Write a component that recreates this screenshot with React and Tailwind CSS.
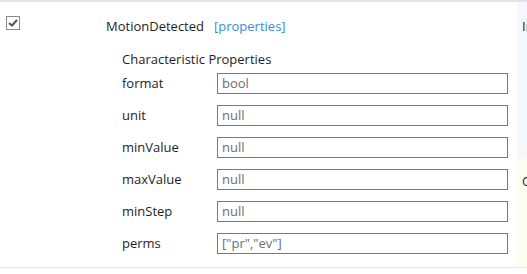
import React from "react";

const props = [
  { key: "format", value: "bool" },
  { key: "unit", value: "null" },
  { key: "minValue", value: "null" },
  { key: "maxValue", value: "null" },
  { key: "minStep", value: "null" },
  { key: "perms", value: '["pr","ev"]' },
];

const App = () => {
  return (
    <div className="w-[527px] h-[274px] bg-white overflow-hidden font-['Open_Sans',sans-serif] text-[13px] text-[#1e1e1e]">
      <div className="flex h-[268px] border-t-2 border-[#e3e3e3] border-b border-b-[#e6e6e6]">
        {/* main cell */}
        <div className="w-[517px] flex">
          <div className="w-[106px] pl-[6px] pt-[14px]">
            <div className="w-[14px] h-[14px] border border-[#8a8a8a] flex items-center justify-center">
              <svg width="10" height="8" viewBox="0 0 10 8">
                <path d="M1 4 L4 6.5 L9 1" stroke="#555" strokeWidth="2" fill="none" />
              </svg>
            </div>
          </div>
          <div className="flex-1 pt-[14px]">
            <div className="flex items-center gap-[10px] leading-[20px]">
              <span>MotionDetected</span>
              <span className="text-[#3b8bd6]">[properties]</span>
            </div>
            <div className="pl-[16px] pt-[14px]">
              <div className="leading-[18px]">Characteristic Properties</div>
              <div className="flex flex-col gap-[11px] pt-[5px]">
                {props.map((p) => (
                  <div key={p.key} className="flex items-center h-[21px]">
                    <div className="w-[95px]">{p.key}</div>
                    <div className="w-[291px] h-[21px] border border-[#7a7a7a] px-[4px] leading-[19px] text-[#6e6e6e]">
                      {p.value}
                    </div>
                  </div>
                ))}
              </div>
            </div>
          </div>
        </div>
        {/* next column, cut off */}
        <div className="w-[10px] flex flex-col overflow-hidden whitespace-nowrap">
          <div className="h-[156px] bg-[#f5f9fe] pl-[5px] pt-[14px] leading-[20px]">In</div>
          <div className="flex-1 bg-[#fcfcef] pl-[5px] pt-[13px] leading-[20px]">Op</div>
        </div>
      </div>
    </div>
  );
};

export default App;
